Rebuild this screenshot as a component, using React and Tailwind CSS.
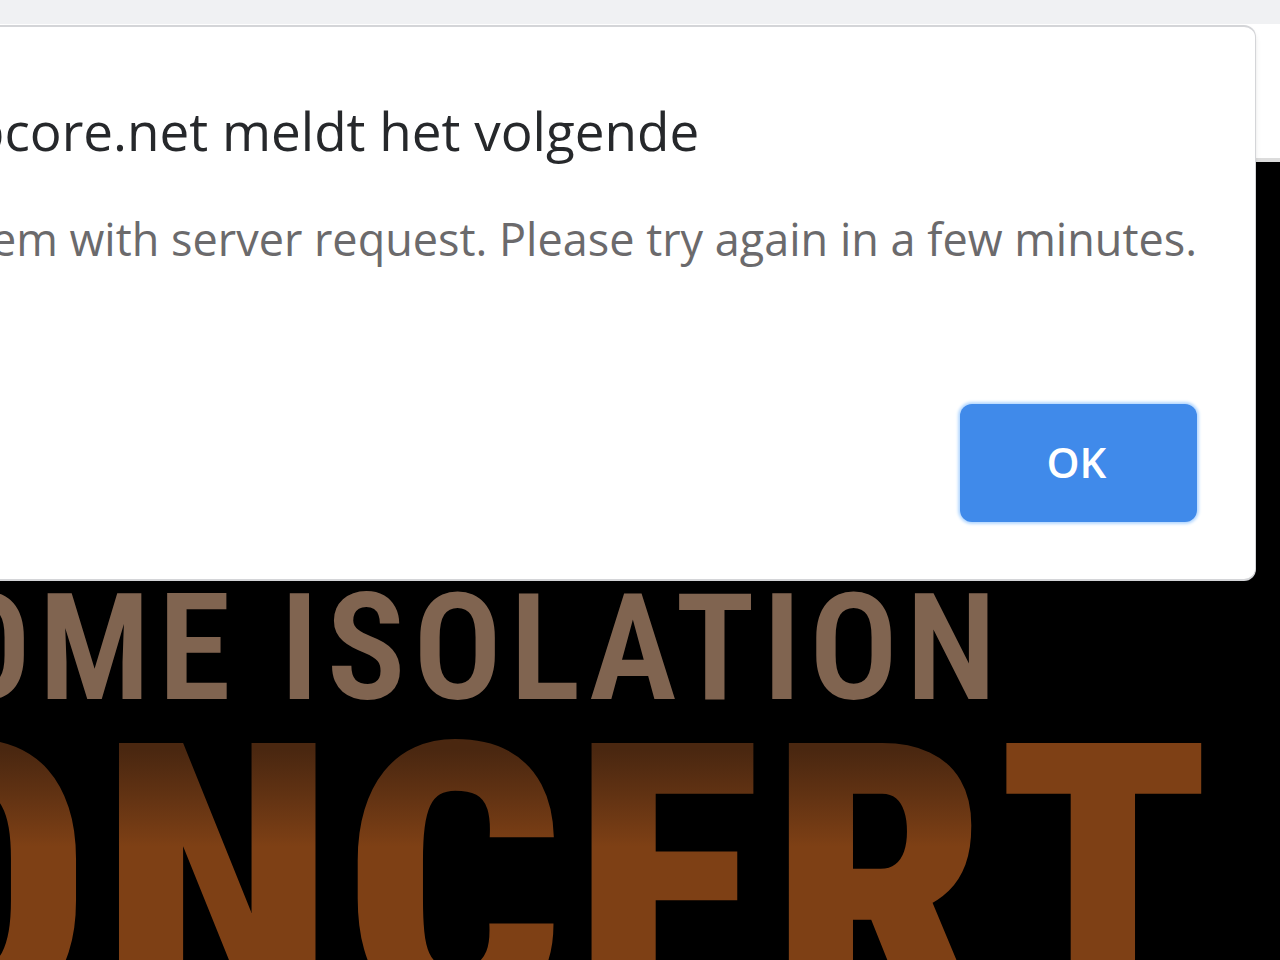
import React, { useState } from 'react';

const AlertDialog = ({ title, message, onClose }) => (
  <div
    role="alertdialog"
    aria-labelledby="alert-title"
    aria-describedby="alert-message"
    className="absolute top-[25px] left-0 right-6 flex flex-col rounded-r-xl border-y-2 border-r border-[#d4d5d8] bg-white pt-[68px] pr-[58px] pb-[57px] shadow-md whitespace-nowrap"
  >
    <h2 id="alert-title" className="-ml-7 text-[53px] leading-[72px] text-[#26282b]">
      {title}
    </h2>
    <p id="alert-message" className="mt-10 self-end text-[45px] leading-[64px] text-[#6b6a6c]">
      {message}
    </p>
    <button
      type="button"
      onClick={onClose}
      className="mt-[133px] h-[118px] w-[237px] self-end rounded-xl bg-[#408aea] pr-1 pb-1 text-[42px] font-semibold text-white shadow-[0_0_3px_2px_#b5d8ff]"
    >
      OK
    </button>
  </div>
);

const App = () => {
  const [open, setOpen] = useState(true);

  return (
    <div className="relative flex h-screen flex-col overflow-hidden bg-black font-['Open_Sans','Noto_Sans',sans-serif]">
      {/* Browser chrome */}
      <header>
        <div className="h-6 bg-[#f0f1f3]" />
        <div className="h-[138px] border-b-4 border-[#dcdcdc] bg-white" />
      </header>

      {/* Poster */}
      <main className="flex flex-1 flex-col items-end pt-[411px] pr-[60px] font-['Roboto_Condensed','Roboto',sans-serif] whitespace-nowrap">
        <p className="mr-[216px] text-[148px] leading-[152px] font-semibold tracking-wider text-[#806450]">OME ISOLATION</p>
        <h1 className="-mt-8 flex text-[384px] leading-[384px] font-black tracking-wide">
          <span className="bg-linear-to-b from-[#4a2710] from-15% to-[#7e4015] to-40% bg-clip-text text-transparent">
            ONCER
          </span>
          <span className="text-[#7e4015]">T</span>
        </h1>
      </main>

      {open && (
        <AlertDialog
          title="pcore.net meldt het volgende"
          message="em with server request. Please try again in a few minutes."
          onClose={() => setOpen(false)}
        />
      )}
    </div>
  );
};

export default App;
